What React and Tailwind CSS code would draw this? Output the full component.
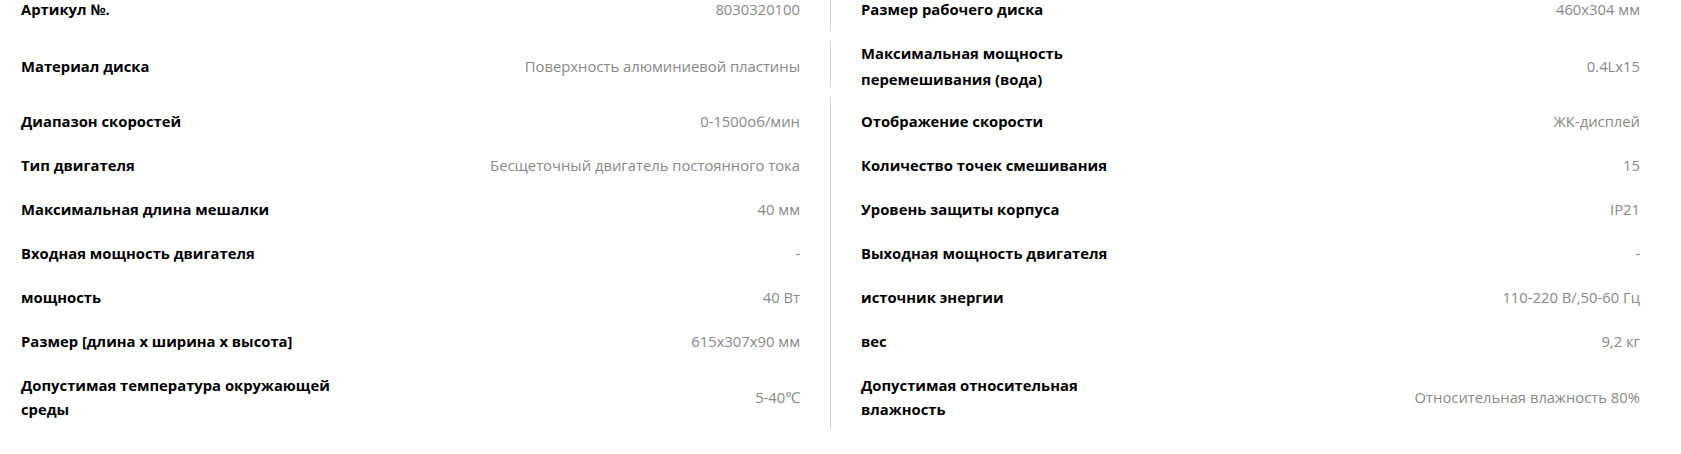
const groups = [
  {
    rowClass: "h-[31px] items-start",
    innerClass: "-mt-[3px] leading-6",
    rows: [
      { left: ["Артикул №.", "8030320100"], right: ["Размер рабочего диска", "460x304 мм"] },
    ],
  },
  {
    rowClass: "h-[46px] items-start",
    innerClass: "h-[52px] -mt-[1px] leading-[26px]",
    rows: [
      {
        left: ["Материал диска", "Поверхность алюминиевой пластины"],
        right: [["Максимальная мощность", "перемешивания (вода)"], "0.4Lx15"],
      },
    ],
  },
  {
    rowClass: "pt-[12px] pb-[8px] items-center",
    innerClass: "leading-6",
    rows: [
      { left: ["Диапазон скоростей", "0-1500об/мин"], right: ["Отображение скорости", "ЖК-дисплей"] },
      { left: ["Тип двигателя", "Бесщеточный двигатель постоянного тока"], right: ["Количество точек смешивания", "15"] },
      { left: ["Максимальная длина мешалки", "40 мм"], right: ["Уровень защиты корпуса", "IP21"] },
      { left: ["Входная мощность двигателя", "-"], right: ["Выходная мощность двигателя", "-"] },
      { left: ["мощность", "40 Вт"], right: ["источник энергии", "110-220 В/,50-60 Гц"] },
      { left: ["Размер [длина x ширина x высота]", "615x307x90 мм"], right: ["вес", "9,2 кг"] },
      {
        left: [["Допустимая температура окружающей", "среды"], "5-40℃"],
        right: [["Допустимая относительная", "влажность"], "Относительная влажность 80%"],
      },
    ],
  },
];

function Label({ text }) {
  const lines = Array.isArray(text) ? text : [text];
  return (
    <div className="w-[340px] shrink-0 font-bold text-black whitespace-nowrap">
      {lines.map((line) => (
        <div key={line}>{line}</div>
      ))}
    </div>
  );
}

function Cell({ pair, side, rowClass, innerClass }) {
  const pad = side === "left" ? "pl-[21px] pr-[30px] border-r border-[#d2d2d2]" : "pl-[30px] pr-[41px]";
  return (
    <div className={`flex ${pad} ${rowClass}`}>
      <div className={`flex flex-1 items-center justify-between ${innerClass}`}>
        <Label text={pair[0]} />
        <div className="text-right text-[#888] whitespace-nowrap">{pair[1]}</div>
      </div>
    </div>
  );
}

export default function App() {
  return (
    <div className="w-[1681px] h-[454px] overflow-hidden bg-white text-[14.8px] font-['Open_Sans','Noto_Sans',sans-serif]">
      <div className="flex flex-col gap-[10px]">
        {groups.map((g, gi) => (
          <div key={gi} className="grid grid-cols-[831px_1fr]">
            {g.rows.map((r, ri) => [
              <Cell key={`l${ri}`} pair={r.left} side="left" rowClass={g.rowClass} innerClass={g.innerClass} />,
              <Cell key={`r${ri}`} pair={r.right} side="right" rowClass={g.rowClass} innerClass={g.innerClass} />,
            ])}
          </div>
        ))}
      </div>
    </div>
  );
}
